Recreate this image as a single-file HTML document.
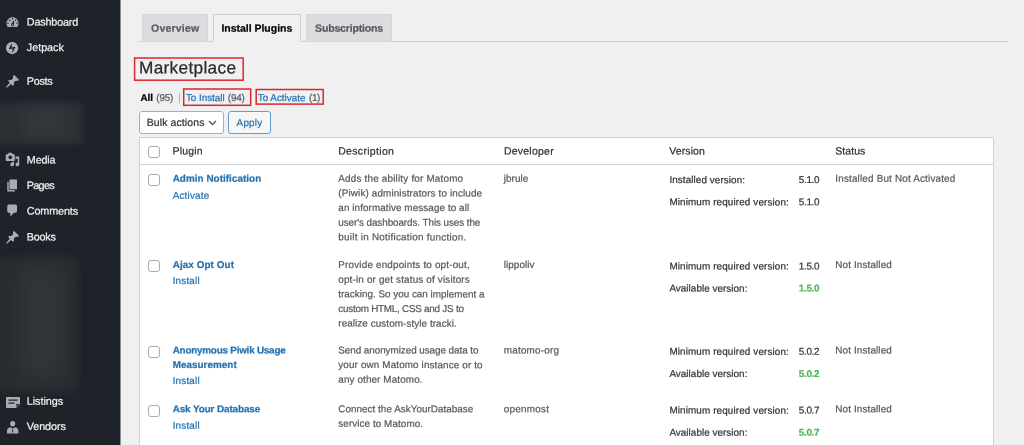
<!DOCTYPE html>
<html lang="en">
<head>
<meta charset="utf-8">
<title>Marketplace</title>
<style>
html,body{margin:0;padding:0}
body{width:1024px;height:445px;overflow:hidden;position:relative;background:#f0f0f1;font-family:"Liberation Sans",sans-serif}
.t{display:block;margin:0;text-decoration:none;position:absolute;white-space:pre;line-height:1;font-family:"Liberation Sans",sans-serif;transform:rotate(0.05deg);transform-origin:0 50%;-webkit-text-stroke:.22px currentColor}
#sb{position:absolute;left:0;top:0;width:121px;height:445px;background:#1e232a;overflow:hidden}
.blur{position:absolute}
.tab{position:absolute;top:14px;height:26px;border:1px solid #d6d7da;background:#dcdcde;box-sizing:content-box}
.tab.on{background:#f0f0f1;border-color:#cdced1;border-bottom-color:#f0f0f1}
#tabline{position:absolute;left:137.500px;top:41px;width:871.500px;height:1px;background:#cfd0d3}
#sel{position:absolute;left:139px;top:111px;width:84.500px;height:22.500px;box-sizing:border-box;border:1px solid #a9acb0;border-radius:3px;background:#fff}
#apply{position:absolute;left:228px;top:111px;width:42.500px;height:22.500px;box-sizing:border-box;border:1px solid #659ccb;border-radius:3px;background:#f6f7f7}
#tbl{position:absolute;left:139px;top:137px;width:855px;height:320px;box-sizing:border-box;border:1px solid #d0d1d4;background:#fff}
#hl{position:absolute;left:140px;top:164px;width:853px;height:1px;background:#d0d1d4}
.cb{position:absolute;width:12px;height:12px;box-sizing:border-box;border:1px solid #a8abae;border-radius:3px;background:#fff}
#txt{position:absolute;left:0;top:0;width:1024px;height:445px;will-change:transform}
svg{position:absolute;overflow:visible}
.ic{fill:#a9adb1}
</style>
</head>
<body>
<div id="sb">
<div class="blur" style="left:-6px;top:103px;width:89px;height:41px;background:#2b3035;filter:blur(2.5px)"></div>
<div class="blur" style="left:24px;top:108px;width:44px;height:30px;background:#32373c;filter:blur(7px)"></div>
<div class="blur" style="left:-6px;top:257px;width:84px;height:136px;background:#262c30;filter:blur(3.500px)"></div>
<div class="blur" style="left:20px;top:266px;width:44px;height:112px;background:#2f3539;filter:blur(9px)"></div>
<div style="position:absolute;left:120px;top:0;width:1px;height:445px;background:#8b8e90"></div>

<svg class="ic" style="left:5.2px;top:14.8px" width="15" height="15" viewBox="0 0 20 20"><path d="M3.76 16h12.48c1.1-1.37 1.76-3.11 1.76-5 0-4.42-3.58-8-8-8s-8 3.58-8 8c0 1.89.66 3.63 1.76 5zM10 4c.55 0 1 .45 1 1s-.45 1-1 1-1-.45-1-1 .45-1 1-1zM6 6c.55 0 1 .45 1 1s-.45 1-1 1-1-.45-1-1 .45-1 1-1zm8 0c.55 0 1 .45 1 1s-.45 1-1 1-1-.45-1-1 .45-1 1-1zm-5.37 5.55L12 7v6c0 1.1-.9 2-2 2s-2-.9-2-2c0-.57.24-1.08.63-1.45zM4 10c.55 0 1 .45 1 1s-.45 1-1 1-1-.45-1-1 .45-1 1-1zm12 0c.55 0 1 .45 1 1s-.45 1-1 1-1-.45-1-1 .45-1 1-1zm-5 3c0-.55-.45-1-1-1s-1 .45-1 1 .45 1 1 1 1-.45 1-1z"/></svg>
<svg class="ic" style="left:6.400px;top:41.900px" width="12.2" height="12.2" viewBox="0 0 32 32"><path fill-rule="evenodd" d="M16 0C7.2 0 0 7.2 0 16s7.200 16 16 16 16-7.200 16-16S24.800 0 16 0zm-.8 18.600H7.300l7.900-15.400v15.400zm1.600 10.200V13.400h7.900l-7.900 15.400z"/></svg>
<svg class="ic" style="left:5px;top:74.1px" width="15" height="15" viewBox="0 0 20 20"><path d="M10.440 3.020l1.820-1.820 6.360 6.350-1.830 1.820c-1.050-.680-2.480-.570-3.410.360l-.750.750c-.920.930-1.040 2.350-.350 3.410l-1.830 1.820-2.410-2.410-2.800 2.790c-.420.420-3.380 2.710-3.800 2.290s1.860-3.390 2.280-3.810l2.790-2.790L4.100 9.360l1.830-1.820c1.050.69 2.480.57 3.400-.36l.75-.75c.93-.92 1.050-2.350.36-3.410z"/></svg>
<svg class="ic" style="left:5px;top:152px" width="15" height="15" viewBox="0 0 20 20"><path d="M13 11V4c0-.55-.45-1-1-1h-1.670L9 1H5L3.670 3H2c-.55 0-1 .45-1 1v7c0 .55.45 1 1 1h10c.55 0 1-.45 1-1zM7 4.500c1.380 0 2.500 1.120 2.500 2.500S8.380 9.500 7 9.500 4.500 8.380 4.500 7 5.620 4.500 7 4.500zM14 6h5v10.500c0 1.380-1.120 2.500-2.500 2.500S14 17.880 14 16.500s1.120-2.500 2.500-2.500c.17 0 .34.020.5.050V9h-3V6zm-4 8.050V13h2v3.500c0 1.380-1.120 2.500-2.500 2.500S7 17.880 7 16.500 8.120 14 9.500 14c.17 0 .34.020.5.050z"/></svg>
<svg class="ic" style="left:5px;top:177.700px" width="15" height="15" viewBox="0 0 20 20"><path d="M6 15V2h10v13H6zm-1 1h8v2H3V5h2v11z"/></svg>
<svg class="ic" style="left:5px;top:203.300px" width="15" height="15" viewBox="0 0 20 20"><path d="M5 2h9c1.100 0 2 .9 2 2v7c0 1.100-.9 2-2 2h-2l-5 5v-5H5c-1.100 0-2-.9-2-2V4c0-1.100.9-2 2-2z"/></svg>
<svg class="ic" style="left:5px;top:229.600px" width="15" height="15" viewBox="0 0 20 20"><path d="M10.440 3.020l1.820-1.820 6.360 6.350-1.830 1.820c-1.050-.680-2.480-.570-3.410.360l-.750.750c-.920.930-1.040 2.350-.350 3.410l-1.830 1.820-2.410-2.410-2.800 2.790c-.420.420-3.380 2.710-3.800 2.290s1.860-3.390 2.280-3.810l2.790-2.790L4.100 9.360l1.830-1.820c1.050.69 2.480.57 3.400-.36l.75-.75c.93-.92 1.050-2.350.36-3.410z"/></svg>
<svg class="ic" style="left:6px;top:397px" width="14" height="11" viewBox="0 0 14 11"><path fill-rule="evenodd" d="M1 0h12a1 1 0 0 1 1 1v6l-4 4H1a1 1 0 0 1-1-1V1a1 1 0 0 1 1-1zm1.500 2.500v1.300h9V2.500zm0 3v1.300h6V5.500zM10.300 10l3-3h-3z"/></svg>
<svg class="ic" style="left:7px;top:420.500px" width="11.400" height="12.400" viewBox="0 0 11.400 12.400"><path fill-rule="evenodd" d="M5.700 0a2.500 2.700 0 0 1 0 5.400a2.500 2.700 0 0 1 0-5.400zM3.300 6.200l2.400 1.200l2.400-1.200c2 .3 3.300 1.600 3.300 3.500v2.700H0V9.700c0-1.900 1.300-3.200 3.300-3.500zM5.200 8.200v3.400h1V8.200z"/></svg>
</div>
<div id="tabline"></div>
<div class="tab" style="left:141.700px;width:64px"></div>
<div class="tab on" style="left:213px;width:85.500px"></div>
<div class="tab" style="left:306px;width:83.500px"></div>
<svg style="left:0;top:0" width="1024" height="445"><g fill="none" stroke="#dc262c" stroke-width="1.5">
<rect x="134.600" y="58" width="108.600" height="22.200"/>
<rect x="183.700" y="89" width="67" height="16.300"/>
<rect x="256.200" y="89.500" width="67" height="14.600"/>
</g></svg>
<div id="sel"></div>
<svg style="left:208px;top:120px" width="9" height="6" viewBox="0 0 9 6"><path d="M1 1l3.5 3.5L8 1" fill="none" stroke="#50575e" stroke-width="1.4"/></svg>
<div id="apply"></div>
<div id="tbl"></div>
<div id="hl"></div>
<i class="cb" style="left:147.6px;top:146px"></i>
<i class="cb" style="left:147.6px;top:174.0px"></i>
<i class="cb" style="left:147.6px;top:260.3px"></i>
<i class="cb" style="left:147.6px;top:345.7px"></i>
<i class="cb" style="left:147.6px;top:404.5px"></i>
<div id="txt">
<a class="t" style="left:26px;top:16px;font-size:10.8px;font-weight:400;color:#f0f0f1;letter-spacing:-0.166px;transform:translate(0.80px,0.60px) rotate(.05deg)">Dashboard</a>
<a class="t" style="left:26px;top:42px;font-size:10.8px;font-weight:400;color:#f0f0f1;letter-spacing:-0.020px;transform:translate(0.80px,0.10px) rotate(.05deg)">Jetpack</a>
<a class="t" style="left:26px;top:75px;font-size:10.8px;font-weight:400;color:#f0f0f1;letter-spacing:-0.304px;transform:translate(0.80px,0.80px) rotate(.05deg)">Posts</a>
<a class="t" style="left:26px;top:154px;font-size:10.8px;font-weight:400;color:#f0f0f1;letter-spacing:-0.155px;transform:translate(0.80px,0.40px) rotate(.05deg)">Media</a>
<a class="t" style="left:26px;top:180px;font-size:10.8px;font-weight:400;color:#f0f0f1;letter-spacing:-0.706px;transform:translate(0.80px,0.00px) rotate(.05deg)">Pages</a>
<a class="t" style="left:26px;top:205px;font-size:10.8px;font-weight:400;color:#f0f0f1;letter-spacing:-0.129px;transform:translate(0.80px,0.60px) rotate(.05deg)">Comments</a>
<a class="t" style="left:26px;top:231px;font-size:10.8px;font-weight:400;color:#f0f0f1;letter-spacing:-0.254px;transform:translate(0.80px,0.50px) rotate(.05deg)">Books</a>
<a class="t" style="left:26px;top:395px;font-size:10.8px;font-weight:400;color:#f0f0f1;letter-spacing:-0.044px;transform:translate(0.80px,0.80px) rotate(.05deg)">Listings</a>
<a class="t" style="left:26px;top:421px;font-size:10.8px;font-weight:400;color:#f0f0f1;letter-spacing:-0.104px;transform:translate(0.80px,0.00px) rotate(.05deg)">Vendors</a>
<a class="t" style="left:151px;top:22px;font-size:10.5px;font-weight:700;color:#54595e;letter-spacing:0.185px;transform:translate(0.10px,0.80px) rotate(.05deg)">Overview</a>
<a class="t" style="left:221px;top:22px;font-size:10.5px;font-weight:700;color:#000;letter-spacing:-0.021px;transform:translate(0.40px,0.80px) rotate(.05deg)">Install Plugins</a>
<a class="t" style="left:315px;top:22px;font-size:10.5px;font-weight:700;color:#54595e;letter-spacing:-0.168px;transform:translate(0.10px,0.80px) rotate(.05deg)">Subscriptions</a>
<h1 class="t" style="left:139px;top:59px;font-size:17.25px;font-weight:400;color:#23282d;letter-spacing:0.303px;transform:translate(0.00px,0.50px) rotate(.05deg)">Marketplace</h1>
<span class="t" style="left:140px;top:93px;font-size:9.9px;font-weight:700;color:#000;letter-spacing:-0.013px;transform:translate(0.50px,0.10px) rotate(.05deg)">All</span>
<span class="t" style="left:156px;top:93px;font-size:9.9px;font-weight:400;color:#54595e;letter-spacing:-0.188px;transform:translate(0.30px,0.10px) rotate(.05deg)">(95)</span>
<span class="t" style="left:178px;top:93px;font-size:9.9px;font-weight:400;color:#a7aaad;transform:translate(0.20px,0.10px) rotate(.05deg)">|</span>
<a class="t" style="left:185px;top:93px;font-size:9.9px;font-weight:400;color:#2271b1;letter-spacing:-0.030px;transform:translate(0.90px,0.10px) rotate(.05deg)">To Install</a>
<span class="t" style="left:227px;top:93px;font-size:9.9px;font-weight:400;color:#54595e;letter-spacing:-0.188px;transform:translate(0.80px,0.10px) rotate(.05deg)">(94)</span>
<a class="t" style="left:257px;top:93px;font-size:9.9px;font-weight:400;color:#2271b1;letter-spacing:0.003px;transform:translate(0.70px,0.10px) rotate(.05deg)">To Activate</a>
<span class="t" style="left:309px;top:93px;font-size:9.9px;font-weight:400;color:#54595e;letter-spacing:-0.339px;transform:translate(0.00px,0.10px) rotate(.05deg)">(1)</span>
<span class="t" style="left:146px;top:117px;font-size:10.5px;font-weight:400;color:#2c3338;letter-spacing:0.098px;transform:translate(0.70px,0.00px) rotate(.05deg)">Bulk actions</span>
<a class="t" style="left:236px;top:118px;font-size:9.9px;font-weight:400;color:#2271b1;letter-spacing:0.199px;transform:translate(0.60px,0.00px) rotate(.05deg)">Apply</a>
<span class="t" style="left:172px;top:145px;font-size:10.5px;font-weight:400;color:#2c3338;letter-spacing:0.179px;transform:translate(0.50px,0.60px) rotate(.05deg)">Plugin</span>
<span class="t" style="left:338px;top:145px;font-size:10.5px;font-weight:400;color:#2c3338;letter-spacing:0.317px;transform:translate(0.20px,0.60px) rotate(.05deg)">Description</span>
<span class="t" style="left:503px;top:145px;font-size:10.5px;font-weight:400;color:#2c3338;letter-spacing:0.241px;transform:translate(0.90px,0.60px) rotate(.05deg)">Developer</span>
<span class="t" style="left:669px;top:145px;font-size:10.5px;font-weight:400;color:#2c3338;letter-spacing:0.095px;transform:translate(0.30px,0.60px) rotate(.05deg)">Version</span>
<span class="t" style="left:835px;top:145px;font-size:10.5px;font-weight:400;color:#2c3338;letter-spacing:0.044px;transform:translate(0.30px,0.60px) rotate(.05deg)">Status</span>
<a class="t" style="left:172px;top:173px;font-size:9.9px;font-weight:700;color:#2271b1;letter-spacing:0.042px;transform:translate(0.70px,0.70px) rotate(.05deg)">Admin Notification</a>
<a class="t" style="left:172px;top:190px;font-size:9.9px;font-weight:400;color:#2271b1;letter-spacing:0.194px;transform:translate(0.70px,0.70px) rotate(.05deg)">Activate</a>
<span class="t" style="left:338px;top:173px;font-size:9.9px;font-weight:400;color:#54595e;letter-spacing:0.198px;transform:translate(0.30px,0.70px) rotate(.05deg)">Adds the ability for Matomo</span>
<span class="t" style="left:338px;top:188px;font-size:9.9px;font-weight:400;color:#54595e;letter-spacing:0.137px;transform:translate(0.30px,0.35px) rotate(.05deg)">(Piwik) administrators to include</span>
<span class="t" style="left:338px;top:203px;font-size:9.9px;font-weight:400;color:#54595e;letter-spacing:0.087px;transform:translate(0.30px,0.00px) rotate(.05deg)">an informative message to all</span>
<span class="t" style="left:338px;top:217px;font-size:9.9px;font-weight:400;color:#54595e;letter-spacing:-0.078px;transform:translate(0.30px,0.65px) rotate(.05deg)">user&#x27;s dashboards. This uses the</span>
<span class="t" style="left:338px;top:232px;font-size:9.9px;font-weight:400;color:#54595e;letter-spacing:0.256px;transform:translate(0.30px,0.30px) rotate(.05deg)">built in Notification function.</span>
<span class="t" style="left:503px;top:173px;font-size:9.9px;font-weight:400;color:#54595e;letter-spacing:0.097px;transform:translate(0.70px,0.70px) rotate(.05deg)">jbrule</span>
<span class="t" style="left:669px;top:175px;font-size:9.9px;font-weight:400;color:#2c3338;letter-spacing:0.087px;transform:translate(0.40px,0.10px) rotate(.05deg)">Installed version:</span>
<span class="t" style="left:798px;top:175px;font-size:9.9px;font-weight:400;color:#2c3338;letter-spacing:-0.317px;transform:translate(0.80px,0.10px) rotate(.05deg)">5.1.0</span>
<span class="t" style="left:669px;top:197px;font-size:9.9px;font-weight:400;color:#2c3338;letter-spacing:0.127px;transform:translate(0.40px,0.30px) rotate(.05deg)">Minimum required version:</span>
<span class="t" style="left:798px;top:197px;font-size:9.9px;font-weight:400;color:#2c3338;letter-spacing:-0.317px;transform:translate(0.80px,0.30px) rotate(.05deg)">5.1.0</span>
<span class="t" style="left:835px;top:173px;font-size:9.9px;font-weight:400;color:#54595e;letter-spacing:0.181px;transform:translate(0.30px,0.70px) rotate(.05deg)">Installed But Not Activated</span>
<a class="t" style="left:172px;top:260px;font-size:9.9px;font-weight:700;color:#2271b1;letter-spacing:0.086px;transform:translate(0.70px,0.00px) rotate(.05deg)">Ajax Opt Out</a>
<a class="t" style="left:172px;top:276px;font-size:9.9px;font-weight:400;color:#2271b1;letter-spacing:0.184px;transform:translate(0.70px,0.00px) rotate(.05deg)">Install</a>
<span class="t" style="left:338px;top:260px;font-size:9.9px;font-weight:400;color:#54595e;letter-spacing:0.183px;transform:translate(0.30px,0.00px) rotate(.05deg)">Provide endpoints to opt-out,</span>
<span class="t" style="left:338px;top:274px;font-size:9.9px;font-weight:400;color:#54595e;letter-spacing:0.167px;transform:translate(0.30px,0.65px) rotate(.05deg)">opt-in or get status of visitors</span>
<span class="t" style="left:338px;top:289px;font-size:9.9px;font-weight:400;color:#54595e;letter-spacing:0.003px;transform:translate(0.30px,0.30px) rotate(.05deg)">tracking. So you can implement a</span>
<span class="t" style="left:338px;top:303px;font-size:9.9px;font-weight:400;color:#54595e;letter-spacing:-0.245px;transform:translate(0.30px,0.95px) rotate(.05deg)">custom HTML, CSS and JS to</span>
<span class="t" style="left:338px;top:318px;font-size:9.9px;font-weight:400;color:#54595e;letter-spacing:0.076px;transform:translate(0.30px,0.60px) rotate(.05deg)">realize custom-style tracki.</span>
<span class="t" style="left:503px;top:260px;font-size:9.9px;font-weight:400;color:#54595e;letter-spacing:0.086px;transform:translate(0.70px,0.00px) rotate(.05deg)">lippoliv</span>
<span class="t" style="left:669px;top:261px;font-size:9.9px;font-weight:400;color:#2c3338;letter-spacing:0.127px;transform:translate(0.40px,0.40px) rotate(.05deg)">Minimum required version:</span>
<span class="t" style="left:798px;top:261px;font-size:9.9px;font-weight:400;color:#2c3338;letter-spacing:-0.317px;transform:translate(0.80px,0.40px) rotate(.05deg)">1.5.0</span>
<span class="t" style="left:669px;top:283px;font-size:9.9px;font-weight:400;color:#2c3338;letter-spacing:0.046px;transform:translate(0.40px,0.60px) rotate(.05deg)">Available version:</span>
<span class="t" style="left:798px;top:283px;font-size:9.9px;font-weight:700;color:#52b65a;letter-spacing:-0.317px;transform:translate(0.80px,0.60px) rotate(.05deg)">1.5.0</span>
<span class="t" style="left:835px;top:260px;font-size:9.9px;font-weight:400;color:#54595e;letter-spacing:0.133px;transform:translate(0.30px,0.00px) rotate(.05deg)">Not Installed</span>
<a class="t" style="left:172px;top:345px;font-size:9.9px;font-weight:700;color:#2271b1;letter-spacing:-0.222px;transform:translate(0.70px,0.40px) rotate(.05deg)">Anonymous Piwik Usage</a>
<a class="t" style="left:172px;top:360px;font-size:9.9px;font-weight:700;color:#2271b1;letter-spacing:0.033px;transform:translate(0.70px,0.05px) rotate(.05deg)">Measurement</a>
<a class="t" style="left:172px;top:376px;font-size:9.9px;font-weight:400;color:#2271b1;letter-spacing:0.184px;transform:translate(0.70px,0.05px) rotate(.05deg)">Install</a>
<span class="t" style="left:338px;top:345px;font-size:9.9px;font-weight:400;color:#54595e;letter-spacing:-0.052px;transform:translate(0.30px,0.40px) rotate(.05deg)">Send anonymized usage data to</span>
<span class="t" style="left:338px;top:360px;font-size:9.9px;font-weight:400;color:#54595e;letter-spacing:0.130px;transform:translate(0.30px,0.05px) rotate(.05deg)">your own Matomo instance or to</span>
<span class="t" style="left:338px;top:374px;font-size:9.9px;font-weight:400;color:#54595e;letter-spacing:0.116px;transform:translate(0.30px,0.70px) rotate(.05deg)">any other Matomo.</span>
<span class="t" style="left:503px;top:345px;font-size:9.9px;font-weight:400;color:#54595e;letter-spacing:0.241px;transform:translate(0.70px,0.40px) rotate(.05deg)">matomo-org</span>
<span class="t" style="left:669px;top:346px;font-size:9.9px;font-weight:400;color:#2c3338;letter-spacing:0.127px;transform:translate(0.40px,0.80px) rotate(.05deg)">Minimum required version:</span>
<span class="t" style="left:798px;top:346px;font-size:9.9px;font-weight:400;color:#2c3338;letter-spacing:-0.317px;transform:translate(0.80px,0.80px) rotate(.05deg)">5.0.2</span>
<span class="t" style="left:669px;top:368px;font-size:9.9px;font-weight:400;color:#2c3338;letter-spacing:0.046px;transform:translate(0.40px,1.00px) rotate(.05deg)">Available version:</span>
<span class="t" style="left:798px;top:368px;font-size:9.9px;font-weight:700;color:#52b65a;letter-spacing:-0.317px;transform:translate(0.80px,1.00px) rotate(.05deg)">5.0.2</span>
<span class="t" style="left:835px;top:345px;font-size:9.9px;font-weight:400;color:#54595e;letter-spacing:0.133px;transform:translate(0.30px,0.40px) rotate(.05deg)">Not Installed</span>
<a class="t" style="left:172px;top:404px;font-size:9.9px;font-weight:700;color:#2271b1;letter-spacing:-0.101px;transform:translate(0.70px,0.20px) rotate(.05deg)">Ask Your Database</a>
<a class="t" style="left:172px;top:420px;font-size:9.9px;font-weight:400;color:#2271b1;letter-spacing:0.184px;transform:translate(0.70px,0.80px) rotate(.05deg)">Install</a>
<span class="t" style="left:338px;top:404px;font-size:9.9px;font-weight:400;color:#54595e;letter-spacing:0.033px;transform:translate(0.30px,0.20px) rotate(.05deg)">Connect the AskYourDatabase</span>
<span class="t" style="left:338px;top:418px;font-size:9.9px;font-weight:400;color:#54595e;letter-spacing:0.075px;transform:translate(0.30px,0.85px) rotate(.05deg)">service to Matomo.</span>
<span class="t" style="left:503px;top:404px;font-size:9.9px;font-weight:400;color:#54595e;letter-spacing:0.261px;transform:translate(0.70px,0.20px) rotate(.05deg)">openmost</span>
<span class="t" style="left:669px;top:405px;font-size:9.9px;font-weight:400;color:#2c3338;letter-spacing:0.127px;transform:translate(0.40px,0.60px) rotate(.05deg)">Minimum required version:</span>
<span class="t" style="left:798px;top:405px;font-size:9.9px;font-weight:400;color:#2c3338;letter-spacing:-0.317px;transform:translate(0.80px,0.60px) rotate(.05deg)">5.0.7</span>
<span class="t" style="left:669px;top:427px;font-size:9.9px;font-weight:400;color:#2c3338;letter-spacing:0.046px;transform:translate(0.40px,0.80px) rotate(.05deg)">Available version:</span>
<span class="t" style="left:798px;top:427px;font-size:9.9px;font-weight:700;color:#52b65a;letter-spacing:-0.317px;transform:translate(0.80px,0.80px) rotate(.05deg)">5.0.7</span>
<span class="t" style="left:835px;top:404px;font-size:9.9px;font-weight:400;color:#54595e;letter-spacing:0.133px;transform:translate(0.30px,0.20px) rotate(.05deg)">Not Installed</span>
</div>
</body>
</html>
